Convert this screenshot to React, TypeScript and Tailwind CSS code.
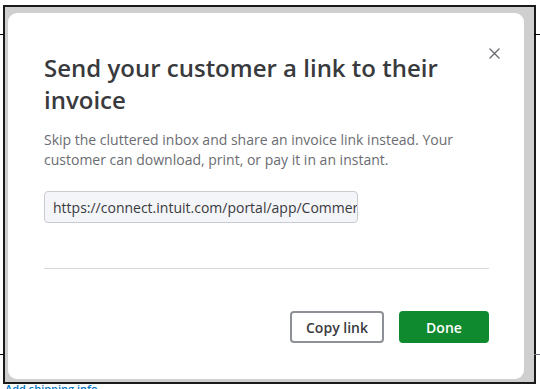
import React from "react";

export default function App() {
  return (
    <div className="relative w-[540px] h-[389px] bg-white overflow-hidden" style={{ fontFamily: "'Open Sans', 'Noto Sans', sans-serif" }}>
      {/* underlying page edges peeking out */}
      <div className="absolute left-0 top-[34px] w-[4px] h-px bg-black" />
      <div className="absolute left-0 top-[354px] w-[4px] h-px bg-black" />
      <div className="absolute right-0 top-[34px] w-[6px] h-px bg-black" />
      <div className="absolute right-0 top-[354px] w-[6px] h-px bg-gray-500" />
      <div className="ml-[3px] mt-[5px] w-[533px] h-[379px] border-[2px] border-[#1a1a1a] bg-[#cfcfcf] pl-[3px] pt-[6px]">
        <div className="relative w-[516px] h-[366px] bg-white rounded-[9px] pl-[36px] pr-[35px] pt-[39px] flex flex-col">
          <button className="absolute top-[30px] right-[20px] w-[20px] h-[20px] flex items-center justify-center text-[#6b6c72]">
            <svg width="11" height="11" viewBox="0 0 11 11" fill="none" stroke="currentColor" strokeWidth="1.4" strokeLinecap="round">
              <path d="M1 1L10 10M10 1L1 10" />
            </svg>
          </button>
          <h1 className="text-[24px] leading-[32px] font-semibold text-[#393a3d] pr-[20px]">
            Send your customer a link to their invoice
          </h1>
          <p className="mt-[14px] text-[14px] leading-[20px] text-[#6b6c72]">
            Skip the cluttered inbox and share an invoice link instead. Your customer can download, print, or pay it in an instant.
          </p>
          <div className="mt-[21px] w-[314px] h-[32px] border border-[#c9cbd0] bg-[#f4f5f8] rounded-[4px] pl-[8px] flex items-center overflow-hidden whitespace-nowrap text-[14px] text-[#393a3d]">
            https://connect.intuit.com/portal/app/CommerceNetwork/view/scs-v1
          </div>
          <div className="mt-[45px] h-px bg-[#d4d7dc]" />
          <div className="mt-[42px] flex justify-end gap-[15px]">
            <button className="w-[94px] h-[32px] border-2 border-[#8d9096] rounded-[4px] bg-white text-[14px] font-semibold text-[#393a3d]">
              Copy link
            </button>
            <button className="w-[90px] h-[32px] rounded-[4px] bg-[#108a2e] text-[14px] font-semibold text-white">
              Done
            </button>
          </div>
        </div>
      </div>
      <div className="h-[5px] overflow-hidden pl-[5px]">
        <div className="-mt-[2px] text-[11px] leading-[13px] text-[#0077c5] font-semibold">Add shipping info</div>
      </div>
    </div>
  );
}
